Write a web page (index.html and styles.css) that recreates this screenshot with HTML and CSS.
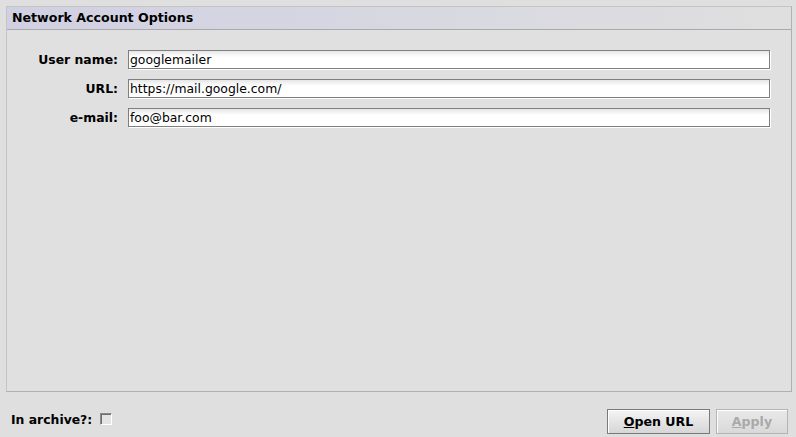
FILE: index.html
```html
<!DOCTYPE html>
<html>
<head>
<meta charset="utf-8">
<link rel="stylesheet" href="styles.css">
</head>
<body>
<div class="panel">
  <div class="panel-header">Network Account Options</div>
  <div class="form">
    <label class="label">User name:</label>
    <div class="field">googlemailer</div>
    <label class="label">URL:</label>
    <div class="field">https://mail.google.com/</div>
    <label class="label">e-mail:</label>
    <div class="field">foo@bar.com</div>
  </div>
</div>
<div class="footer">
  <div class="archive">
    <span class="label">In archive?:</span>
    <span class="checkbox"></span>
  </div>
  <div class="buttons">
    <button class="btn"><u>O</u>pen URL</button>
    <button class="btn disabled"><u>A</u>pply</button>
  </div>
</div>
</body>
</html>
```
FILE: styles.css
```css
html, body {
  margin: 0;
  padding: 0;
  background: #dfdfdf;
  font-family: "DejaVu Sans", sans-serif;
  font-size: 12.4px;
  color: #000;
}
.panel {
  margin: 6px 4px 0 6px;
  height: 384px;
  border-top: 1px solid #c4c4c4;
  border-left: 1px solid #c4c4c4;
  border-right: 1px solid #b0b0b0;
  border-bottom: 1px solid #b0b0b0;
  box-sizing: content-box;
  background: #e0e0e0;
}
.panel-header {
  height: 22px;
  line-height: 22px;
  padding-left: 5px;
  font-weight: bold;
  font-size: 12.6px;
  border-bottom: 1px solid #a9a9a9;
  background: linear-gradient(to right, #d0d0e2 0%, #d6d6e2 40%, #dfdfdf 100%);
}
.form {
  display: grid;
  grid-template-columns: 111px 642px;
  column-gap: 10px;
  row-gap: 10px;
  padding: 20px 0 0 0;
  align-items: center;
}
.label {
  font-weight: bold;
  text-align: right;
}
.field {
  height: 19px;
  box-sizing: border-box;
  border: 1px solid #7f7f7f;
  box-shadow: 1px 1px 0 #ffffff;
  background: linear-gradient(to bottom, #e6e6e6 0px, #ffffff 6px, #ffffff 100%);
  line-height: 17px;
  padding-left: 1px;
  white-space: nowrap;
  overflow: hidden;
}
.footer {
  display: flex;
  justify-content: space-between;
  align-items: center;
  padding: 17px 8px 0 11px;
}
.archive {
  display: flex;
  align-items: center;
  gap: 8px;
  margin-top: -5px;
}
.checkbox {
  width: 12px;
  height: 12px;
  box-sizing: border-box;
  border-top: 1px solid #8a8a8a;
  border-left: 1px solid #8a8a8a;
  border-right: 1px solid #ffffff;
  border-bottom: 1px solid #ffffff;
  box-shadow: inset 1px 1px 0 #6e6e6e;
  background: #e4e4e4;
}
.buttons {
  display: flex;
  gap: 6px;
}
.btn {
  height: 25px;
  box-sizing: border-box;
  font-family: "DejaVu Sans", sans-serif;
  font-size: 12.6px;
  font-weight: bold;
  color: #000;
  border: 1px solid #7a7a7a;
  box-shadow: inset 1px 1px 0 #ffffff;
  background: linear-gradient(to bottom, #f4f4f4 0%, #e2e2e2 60%, #d6d6d6 100%);
  padding: 0;
  width: 103px;
}
.btn.disabled {
  width: 72px;
  color: #a9a9a9;
  border-color: #b4b4b4;
  background: linear-gradient(to bottom, #e8e8e8 0%, #e0e0e0 60%, #d8d8d8 100%);
}
```
